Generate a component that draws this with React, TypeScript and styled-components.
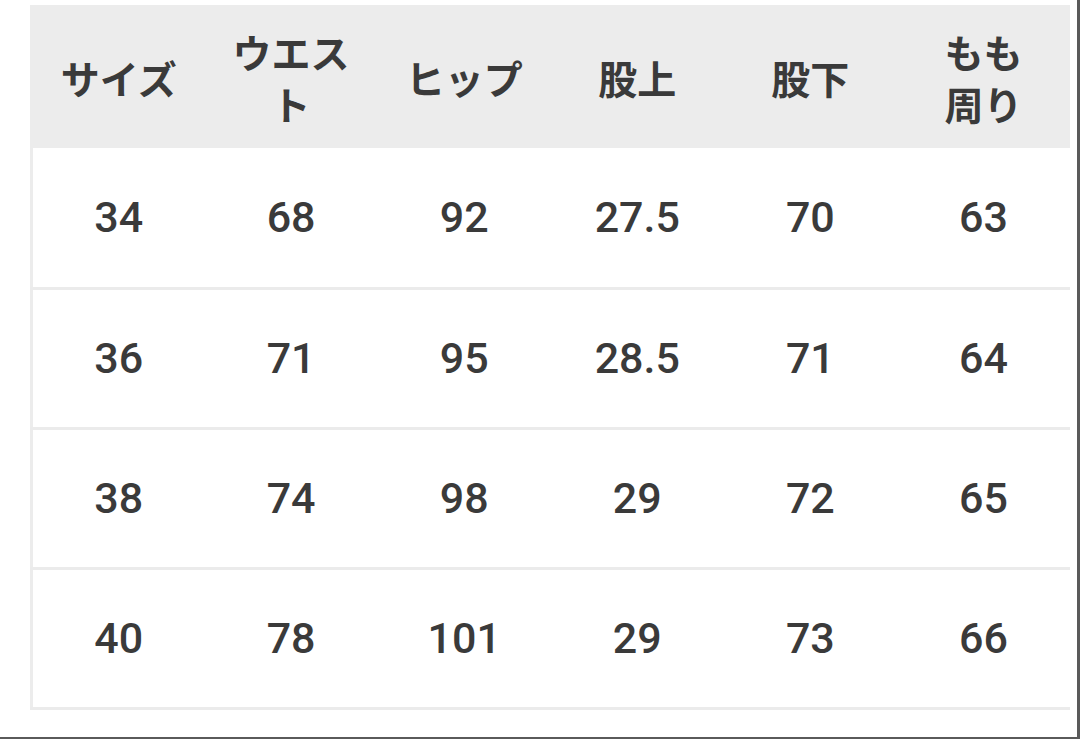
import styled, { createGlobalStyle } from 'styled-components';

const GlobalStyle = createGlobalStyle`
  html, body {
    margin: 0;
    padding: 0;
    background: #ffffff;
  }
`;

const Frame = styled.div`
box-sizing: border-box;
width: 1080px;
height: 739px;
padding: 5px 0 0 30px;
background: #ffffff;
border-right: 3px solid #5a5a5a;
border-bottom: 2px solid #5a5a5a;
font-family: Roboto, "Noto Sans CJK JP", sans-serif;
`;

const SizeTable = styled.table`
width: 1040px;
border-collapse: collapse;
table-layout: fixed;
color: #3a3a3a;
border-left: 3px solid #ececec;
`;

const HeadRow = styled.tr`
height: 143px;
background: #ececec;
`;

const HeadCell = styled.th`
padding: 0 10px;
font-family: "Noto Sans CJK JP", sans-serif;
font-size: 39px;
font-weight: 600;
line-height: 52px;
text-align: center;
vertical-align: middle;
`;

const BodyRow = styled.tr`
height: 140px;
border-bottom: 3px solid #ebebeb;
`;

const BodyCell = styled.td`
padding: 0;
font-size: 43px;
font-weight: 500;
text-align: center;
vertical-align: middle;
`;

const headers = [
  ['サイズ'],
  ['ウエス', 'ト'],
  ['ヒップ'],
  ['股上'],
  ['股下'],
  ['もも', '周り'],
];

const rows = [
  ['34', '68', '92', '27.5', '70', '63'],
  ['36', '71', '95', '28.5', '71', '64'],
  ['38', '74', '98', '29', '72', '65'],
  ['40', '78', '101', '29', '73', '66'],
];

const App = () => (
  <>
    <GlobalStyle />
    <Frame>
      <SizeTable>
        <thead>
          <HeadRow>
            {headers.map((lines) => (
              <HeadCell key={lines.join('')}>
                {lines.map((line, i) => (
                  <span key={line}>
                    {i > 0 && <br />}
                    {line}
                  </span>
                ))}
              </HeadCell>
            ))}
          </HeadRow>
        </thead>
        <tbody>
          {rows.map((row) => (
            <BodyRow key={row[0]}>
              {row.map((value, i) => (
                <BodyCell key={i}>{value}</BodyCell>
              ))}
            </BodyRow>
          ))}
        </tbody>
      </SizeTable>
    </Frame>
  </>
);

export default App;
